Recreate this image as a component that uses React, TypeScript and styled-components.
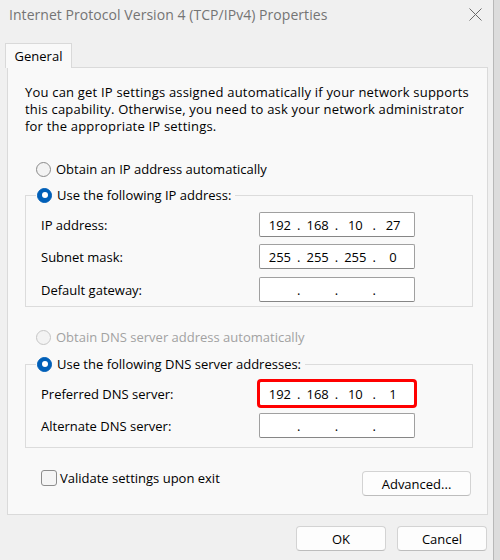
import React from 'react';
import styled, { createGlobalStyle } from 'styled-components';

const GlobalStyle = createGlobalStyle`
  html, body { margin: 0; padding: 0; }
  body {
    width: 500px;
    height: 560px;
    overflow: hidden;
    background: #dcdcdc;
    font-family: "Open Sans", "Noto Sans", sans-serif;
    font-size: 13px;
    color: #000;
  }
`;

const Window = styled.div`
  box-sizing: border-box;
  width: 494px;
  height: 560px;
  background: #f0f0f0;
  border-right: 1px solid #b8b8b8;
  display: flex;
  flex-direction: column;
`;

const TitleBar = styled.div`
  height: 28px;
  display: flex;
  align-items: center;
  justify-content: space-between;
  padding: 0 11px 0 9px;
`;

const Title = styled.span`
  font-size: 14px;
  letter-spacing: 0.05px;
  color: #747474;
  white-space: nowrap;
`;

const TabStrip = styled.div`
  display: flex;
  margin-top: 15px;
  padding-left: 5px;
`;

const Tab = styled.div`
  position: relative;
  z-index: 1;
  box-sizing: border-box;
  width: 67px;
  height: 25px;
  margin-bottom: -1px;
  background: #f9f9f9;
  border: 1px solid #d9d9d9;
  border-bottom: none;
  display: flex;
  align-items: center;
  justify-content: center;
`;

const Panel = styled.div`
  box-sizing: border-box;
  width: 481px;
  height: 448px;
  margin-left: 7px;
  background: #f9f9f9;
  border: 1px solid #dadada;
  padding: 16px 14px 0 17px;
  display: flex;
  flex-direction: column;
`;

const Description = styled.p`
  margin: 0;
  line-height: 17px;
  letter-spacing: 0.2px;
  white-space: nowrap;
`;

const RadioRow = styled.label<{ $top?: number; $disabled?: boolean }>`
  display: flex;
  align-items: center;
  height: 20px;
  margin-top: ${(p) => p.$top ?? 0}px;
  padding-left: 11px;
  gap: 5px;
  color: ${(p) => (p.$disabled ? '#a2a2a2' : '#000')};
  white-space: nowrap;
`;

const Radio = styled.span<{ $checked?: boolean; $disabled?: boolean }>`
  box-sizing: border-box;
  width: 15px;
  height: 15px;
  border-radius: 50%;
  flex: none;
  display: flex;
  align-items: center;
  justify-content: center;
  background: ${(p) => (p.$checked ? '#005fb8' : '#f3f3f3')};
  border: 1px solid
    ${(p) => (p.$checked ? '#005fb8' : p.$disabled ? '#c6c6c6' : '#8a8a8a')};

  &::after {
    content: '';
    display: ${(p) => (p.$checked ? 'block' : 'none')};
    width: 6px;
    height: 6px;
    border-radius: 50%;
    background: #fff;
  }
`;

const Group = styled.fieldset<{ $top: number; $bottom: number }>`
  margin: ${(p) => p.$top}px 0 0 0;
  padding: 0 14px ${(p) => p.$bottom}px 10px;
  border: 1px solid #dcdcdc;
  min-width: 0;
`;

const Legend = styled.legend`
  padding: 0 4px 0 1px;
  display: flex;
  align-items: center;
  height: 20px;
  gap: 5px;
  white-space: nowrap;
`;

const FieldRow = styled.div<{ $top: number }>`
  display: flex;
  align-items: center;
  height: 25px;
  margin-top: ${(p) => p.$top}px;
  padding-left: 5px;
`;

const FieldLabel = styled.span`
  width: 218px;
  white-space: nowrap;
`;

const IpBox = styled.div<{ $highlight?: boolean }>`
  box-sizing: border-box;
  width: 156px;
  height: 25px;
  background: #fff;
  border: 1px solid #a0a0a0;
  border-bottom-color: #868686;
  border-radius: 2px;
  display: flex;
  align-items: center;
  padding: 0 4px 0 3px;
  outline: ${(p) => (p.$highlight ? '3px solid #f00' : 'none')};
  outline-offset: -1px;
`;

const Octet = styled.span`
  width: 34px;
  text-align: center;
`;

const Dot = styled.span`
  width: 4px;
  text-align: center;
`;

const BottomRow = styled.div`
  display: flex;
  justify-content: space-between;
  align-items: flex-start;
  margin-top: 20px;
  padding-left: 16px;
  padding-right: 2px;
`;

const CheckRow = styled.label`
  display: flex;
  align-items: center;
  height: 20px;
  gap: 3px;
  white-space: nowrap;
`;

const CheckBox = styled.span`
  box-sizing: border-box;
  width: 16px;
  height: 16px;
  border: 1px solid #8d8d8d;
  border-radius: 3px;
  background: #f5f5f5;
`;

const Button = styled.button<{ $width: number; $top?: number }>`
  box-sizing: border-box;
  width: ${(p) => p.$width}px;
  height: 25px;
  margin-top: ${(p) => p.$top ?? 0}px;
  padding: 0;
  background: #fdfdfd;
  border: 1px solid #d3d3d3;
  border-bottom-color: #bdbdbd;
  border-radius: 4px;
  font-family: inherit;
  font-size: 13px;
  color: #000;
`;

const Footer = styled.div`
  display: flex;
  justify-content: flex-end;
  gap: 11px;
  margin-top: 11px;
  padding-right: 6px;
`;

const CloseIcon = () => (
  <svg width="13" height="13" viewBox="0 0 13 13">
    <path d="M0.5 0.5 L12.5 12.5 M12.5 0.5 L0.5 12.5" stroke="#6a6a6a" strokeWidth="1" fill="none" />
  </svg>
);

const IpField = ({ value, highlight }: { value?: string[]; highlight?: boolean }) => {
  const parts = value ?? ['', '', '', ''];
  return (
    <IpBox $highlight={highlight}>
      {parts.map((p, i) => (
        <React.Fragment key={i}>
          {i > 0 && <Dot>.</Dot>}
          <Octet>{p}</Octet>
        </React.Fragment>
      ))}
    </IpBox>
  );
};

export default function App() {
  return (
    <>
      <GlobalStyle />
      <Window>
        <TitleBar>
          <Title>Internet Protocol Version 4 (TCP/IPv4) Properties</Title>
          <CloseIcon />
        </TitleBar>
        <TabStrip>
          <Tab>General</Tab>
        </TabStrip>
        <Panel>
          <Description>
            You can get IP settings assigned automatically if your network supports
            <br />
            this capability. Otherwise, you need to ask your network administrator
            <br />
            for the appropriate IP settings.
          </Description>

          <RadioRow $top={24}>
            <Radio />
            Obtain an IP address automatically
          </RadioRow>

          <Group $top={6} $bottom={4}>
            <Legend>
              <Radio $checked />
              Use the following IP address:
            </Legend>
            <FieldRow $top={7}>
              <FieldLabel>IP address:</FieldLabel>
              <IpField value={['192', '168', '10', '27']} />
            </FieldRow>
            <FieldRow $top={7}>
              <FieldLabel>Subnet mask:</FieldLabel>
              <IpField value={['255', '255', '255', '0']} />
            </FieldRow>
            <FieldRow $top={8}>
              <FieldLabel>Default gateway:</FieldLabel>
              <IpField />
            </FieldRow>
          </Group>

          <RadioRow $top={20} $disabled>
            <Radio $disabled />
            Obtain DNS server address automatically
          </RadioRow>

          <Group $top={7} $bottom={9}>
            <Legend>
              <Radio $checked />
              Use the following DNS server addresses:
            </Legend>
            <FieldRow $top={7}>
              <FieldLabel>Preferred DNS server:</FieldLabel>
              <IpField value={['192', '168', '10', '1']} highlight />
            </FieldRow>
            <FieldRow $top={7}>
              <FieldLabel>Alternate DNS server:</FieldLabel>
              <IpField />
            </FieldRow>
          </Group>

          <BottomRow>
            <CheckRow>
              <CheckBox />
              Validate settings upon exit
            </CheckRow>
            <Button $width={109} $top={3}>Advanced...</Button>
          </BottomRow>
        </Panel>
        <Footer>
          <Button $width={90}>OK</Button>
          <Button $width={90}>Cancel</Button>
        </Footer>
      </Window>
    </>
  );
}
